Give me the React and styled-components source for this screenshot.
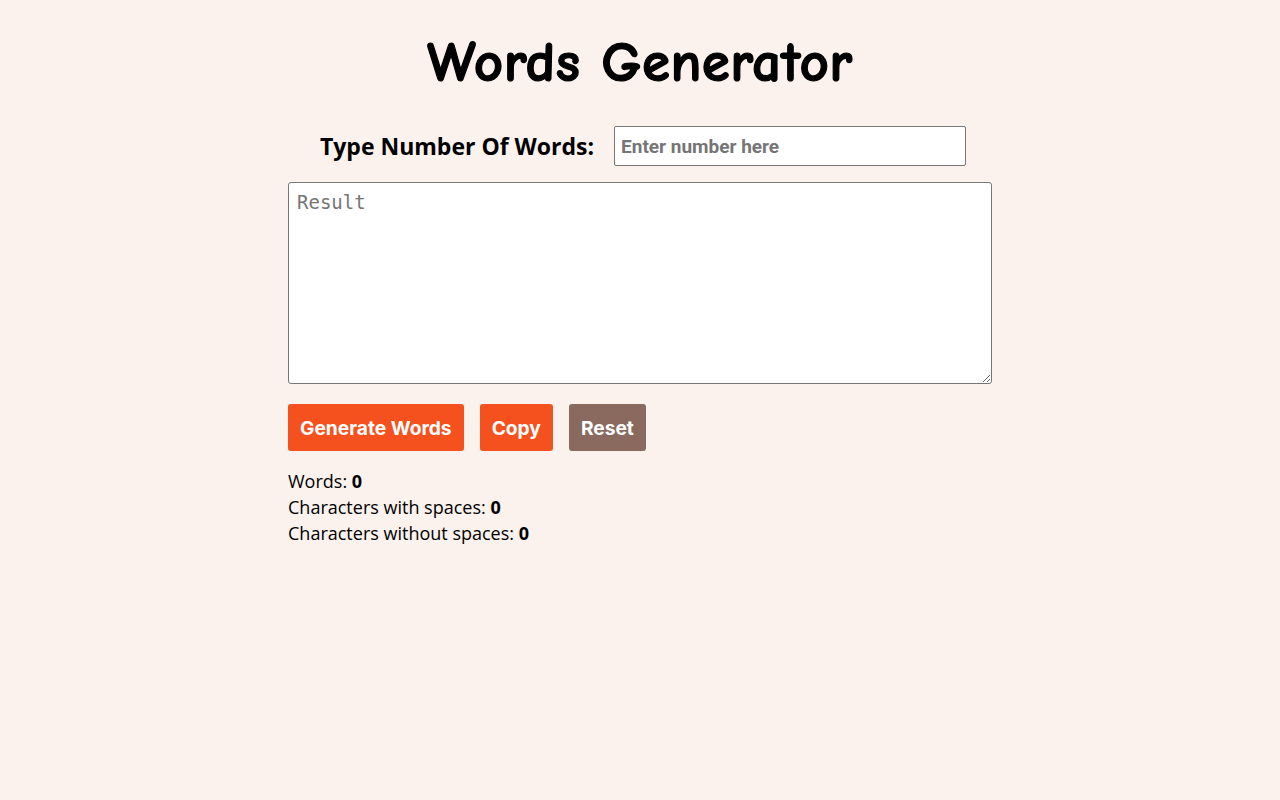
import styled, { createGlobalStyle } from "styled-components";

const GlobalStyle = createGlobalStyle`
    body {
        margin: 0;
        background-color: #fbf2ed;
        font-family: "Open Sans", "Noto Sans", sans-serif;
        color: #000;
    }
`;

const App = () => {
    return (
        <>
            <GlobalStyle />
            <Page>
                <Title>Words Generator</Title>
                <InputRow>
                    <Label htmlFor="count">Type Number Of Words:</Label>
                    <NumberInput id="count" type="number" placeholder="Enter number here" />
                </InputRow>
                <ResultArea placeholder="Result" />
                <Buttons>
                    <Button>Generate Words</Button>
                    <Button>Copy</Button>
                    <Button secondary>Reset</Button>
                </Buttons>
                <Stats>
                    <div>Words: <b>0</b></div>
                    <div>Characters with spaces: <b>0</b></div>
                    <div>Characters without spaces: <b>0</b></div>
                </Stats>
            </Page>
        </>
    );
};

const Page = styled.div`
    width: 704px;
    margin: 0 auto;
    padding-top: 30px;
    display: flex;
    flex-direction: column;
`;

const Title = styled.h1`
    margin: 0 0 30px;
    text-align: center;
    font-family: "Comic Sans MS", "Comic Neue", cursive;
    font-size: 57px;
    font-weight: 700;
    line-height: 66px;
    -webkit-text-stroke: 1.2px #000;
    letter-spacing: 0.5px;
`;

const InputRow = styled.div`
    display: flex;
    align-items: center;
    justify-content: center;
    gap: 20px;
    margin-bottom: 16px;
    padding-left: 6px;
`;

const Label = styled.label`
    font-size: 23px;
    font-weight: 700;
`;

const NumberInput = styled.input`
    box-sizing: border-box;
    width: 352px;
    height: 40px;
    border: 1px solid #767676;
    border-radius: 2px;
    padding: 0 6px;
    font-family: "Roboto", "Liberation Sans", sans-serif;
    font-size: 19px;
    font-weight: 700;
    outline: none;

    &::placeholder {
        color: #757575;
    }
`;

const ResultArea = styled.textarea`
    box-sizing: border-box;
    width: 704px;
    height: 202px;
    border: 1px solid #767676;
    border-radius: 3px;
    padding: 8px;
    font-family: "DejaVu Sans Mono", monospace;
    font-size: 19px;
    margin: 0;
    display: block;

    &::placeholder {
        color: #757575;
    }
`;

const Buttons = styled.div`
    display: flex;
    gap: 16px;
    margin-top: 20px;
`;

const Button = styled.button`
    height: 47px;
    padding: 0 12px;
    border: none;
    border-radius: 3px;
    background-color: ${(props) => (props.secondary ? "#8a6a5f" : "#f5511e")};
    color: #fff;
    font-family: "Inter", sans-serif;
    font-size: 19.2px;
    font-weight: 700;
    cursor: pointer;
`;

const Stats = styled.div`
    margin-top: 17px;
    font-size: 18px;
    line-height: 26px;
`;

export default App;
